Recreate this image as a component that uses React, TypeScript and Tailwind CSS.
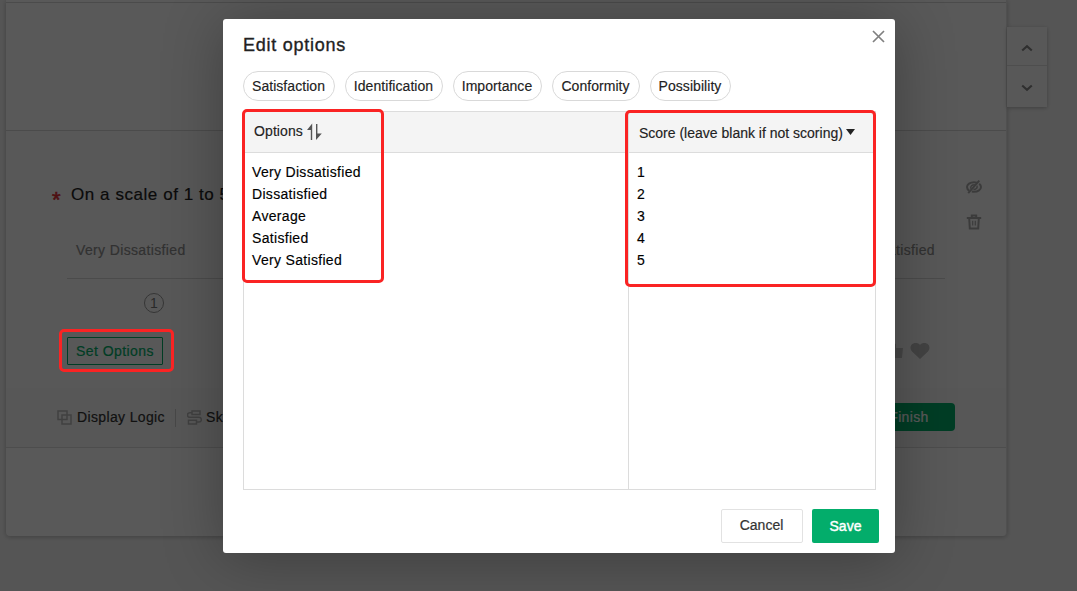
import React from "react";

const presets = [
  { label: "Satisfaction", width: "w-[92px]" },
  { label: "Identification", width: "w-[98px]" },
  { label: "Importance", width: "w-[89px]" },
  { label: "Conformity", width: "w-[88px]" },
  { label: "Possibility", width: "w-[81px]" },
];

const options = ["Very Dissatisfied", "Dissatisfied", "Average", "Satisfied", "Very Satisfied"];

function SideButtons() {
  return (
    <div className="mt-[27px] flex h-20 w-10 flex-col bg-[#fdfdfd] shadow-[0_1px_4px_rgba(0,0,0,0.25)]">
      <div className="flex h-[39px] items-center justify-center border-b border-[#dedede]">
        <svg width="12" height="8" viewBox="0 0 12 8" fill="none" stroke="#888" strokeWidth="2.200" className="mt-[3px]">
          <path d="M1.2 6.500L6 2.200l4.800 4.300" />
        </svg>
      </div>
      <div className="flex flex-1 items-center justify-center">
        <svg width="12" height="8" viewBox="0 0 12 8" fill="none" stroke="#888" strokeWidth="2.200" className="mt-[2px]">
          <path d="M1.2 1.500L6 5.800l4.800-4.300" />
        </svg>
      </div>
    </div>
  );
}

function HiddenEyeIcon() {
  return (
    <svg width="16" height="14" viewBox="0 0 16 14" fill="none" stroke="#aaa" strokeWidth="2">
      <path d="M3.200 10.800C1.800 9.800 1 8.500 1 7c0-2.700 3-4.800 7-4.800 1.100 0 2 .1 2.900.4M13.200 3.700C14.400 4.600 15 5.700 15 7c0 2.700-3 4.800-7 4.800-.8 0-1.500-.1-2.200-.2" />
      <path d="M2.200 13.200L13.300.6" />
      <path d="M4.900 8.800C4.200 6.200 5.900 4.600 8.800 4.700M11.100 5.600c.5 2.500-1.200 4-3.700 3.900" strokeWidth="1.500" />
    </svg>
  );
}

function TrashIcon() {
  return (
    <svg width="16" height="16" viewBox="0 0 16 16" fill="none" stroke="#aaa" strokeWidth="2">
      <path d="M.8 4h14.400M5.800 3.500V1.500h4.400v2M3.200 4.500l.6 10h8.400l.6-10" />
      <path d="M6.700 6.800v4.700M9.300 6.800v4.700" strokeWidth="1.200" />
    </svg>
  );
}

function QuestionPage() {
  return (
    <div className="flex h-full items-start pl-[6px]">
      <div className="h-[536px] w-[1001px] shrink-0 rounded-b-sm border-r border-[#e4e4e4] bg-white shadow-[0_1px_5px_rgba(0,0,0,0.25)]">
        <div className="h-[3px] border-b border-[#d8d8d8]" />
        <div className="h-32 border-b border-[#d8d8d8]" />
        <div className="h-[317px] border-b border-[#dcdcdc]">
          <div className="flex h-[257px] justify-between bg-[#fdfdfd] pt-[49px] pl-[46px]">
            <div className="w-[893px]">
              <div className="flex h-[29px] items-center">
                <span className="mt-[11px] w-[19px] text-[22px] leading-none text-[#e02f36] [-webkit-text-stroke:0.6px_#e02f36]">*</span>
                <span className="text-[17px] tracking-[0.56px] text-[#222] [-webkit-text-stroke:0.2px_#222]">On a scale of 1 to 5</span>
              </div>
              <div className="ml-[15px] flex h-[70px] items-center justify-between border-b border-[#d6d6d6] pt-[14px] pr-[10px] pl-[9px] text-[14px] tracking-[0.36px] text-[#8d8d8d] [-webkit-text-stroke:0.2px_#8d8d8d]">
                <span>Very Dissatisfied</span>
                <span>Very Satisfied</span>
              </div>
              <div className="mt-[14px] ml-[92px] flex size-5 items-center justify-center rounded-full border border-[#999] text-[14px] text-[#777]">1</div>
              <div className="mt-6 ml-[15px] flex h-[28px] items-center justify-between pr-[15px]">
                <div className="flex h-7 w-24 items-center justify-center rounded-[1px] border border-[#00ae68] text-[14px] tracking-[0.43px] text-[#00ae68] [-webkit-text-stroke:0.2px_#00ae68]">Set Options</div>
                <div className="flex items-center gap-[6px]">
                  <svg width="20" height="18" viewBox="0 0 20 18" fill="#c8c8c8"><path d="M1 7h4v9H1zM6 7l4-6 2 1v4h7l-1 10H6z" /></svg>
                  <svg width="20" height="18" viewBox="0 0 20 18" fill="#bfbfbf"><path d="M10 17L2 9.500C-1 6 .8 1 5.500 1 7.500 1 9 1.600 10 3c1-1.400 2.500-2 4.500-2C19.200 1 21 6 18 9.500z" /></svg>
                </div>
              </div>
            </div>
            <div className="flex w-10 flex-col gap-5">
              <HiddenEyeIcon />
              <TrashIcon />
            </div>
          </div>
          <div className="flex h-[59px] items-center bg-[#fafafa] pr-[51px] pl-[51px] text-[14px] tracking-[0.36px] text-[#333]">
            <svg width="15" height="15" viewBox="0 0 15 15" fill="none" stroke="#b8b8b8" strokeWidth="1.500"><path d="M5 9.500H1V1h9v3.500M5 5h9v9H5zM10 5v4.500H5" /></svg>
            <span className="ml-[5px] [-webkit-text-stroke:0.2px_#333]">Display Logic</span>
            <span className="mr-[11px] ml-[10px] h-[18px] w-px bg-[#ccc]" />
            <svg width="15" height="15" viewBox="0 0 15 15" fill="none" stroke="#b8b8b8" strokeWidth="1.500"><path d="M5 1h8v3.500H5zM5 2.700H2.800a2.300 2.300 0 0 0 0 4.600h9.200a2.300 2.300 0 0 1 0 4.700H9.500M1.500 10.200h8V14h-8z" /></svg>
            <span className="ml-1 [-webkit-text-stroke:0.2px_#333]">Skip Logic</span>
            <div className="mb-[2px] ml-auto flex h-7 w-[92px] items-center justify-center rounded-sm bg-[#00af6b] text-white [-webkit-text-stroke:0.2px_white]"><span className="mt-px">Finish</span></div>
          </div>
        </div>
      </div>
      <SideButtons />
    </div>
  );
}

function SortIcon() {
  return (
    <svg width="15" height="18" viewBox="0 0 15 18" fill="#555">
      <path d="M5.200.5v16.500H3.800V7H0z" />
      <path d="M9 1h1.400v9.500H14.800L9 17z" />
    </svg>
  );
}

function EditOptionsDialog() {
  return (
    <div className="flex h-[534px] w-[672px] flex-col rounded-[3px] bg-white px-5 shadow-[0_4px_60px_rgba(0,0,0,0.3)]">
      <div className="flex h-[52px] justify-between">
        <h2 className="mt-[13px] text-[18px] leading-[26px] tracking-[0.75px] text-[#222] [-webkit-text-stroke:0.35px_#222]">Edit options</h2>
        <svg width="13" height="13" viewBox="0 0 13 13" fill="none" stroke="#808080" strokeWidth="1.700" className="mt-[11px] -mr-[10px]"><path d="M1 1l11 11M12 1L1 12" /></svg>
      </div>
      <div className="flex gap-[10px] text-[14px] text-[#222]">
        {presets.map((p) => (
          <button key={p.label} className={`${p.width} h-[30px] shrink-0 rounded-full border border-[#d9d9d9] pr-px tracking-[0.05px] whitespace-nowrap [-webkit-text-stroke:0.15px_#222]`}>{p.label}</button>
        ))}
      </div>
      <div className="mt-[10px] flex h-[379px] w-[633px] border border-[#dcdcdc] text-[14px] [-webkit-text-stroke:0.15px]">
        <div className="w-[385px] border-r border-[#dcdcdc]">
          <div className="flex h-[41px] items-center gap-[4px] border-b border-[#dcdcdc] bg-[#f4f4f4] pl-[10px] text-[#222]">
            <span className="mb-[2px] tracking-[0.1px]">Options</span>
            <SortIcon />
          </div>
          <div className="pt-2 pl-2 leading-[22px] tracking-[0.32px] text-black">
            {options.map((o) => <div key={o}>{o}</div>)}
          </div>
        </div>
        <div className="flex-1">
          <div className="flex h-[41px] items-center border-b border-[#dcdcdc] bg-[#f4f4f4] pt-[2px] pl-[10px] text-[#222]">
            <span>Score (leave blank if not scoring)</span>
            <svg width="9" height="6" viewBox="0 0 9 6" fill="#222" className="mb-[3px] ml-[3px]"><path d="M0 0h9L4.500 6z" /></svg>
          </div>
          <div className="pt-2 pl-2 leading-[22px] text-black">
            {options.map((o, i) => <div key={o}>{i + 1}</div>)}
          </div>
        </div>
      </div>
      <div className="mt-[19px] -mr-1 flex justify-end gap-[9px] text-[14px]">
        <button className="h-[34px] w-[82px] rounded-[2px] border border-[#e2e2e2] pr-px pb-[2px] text-[#333] [-webkit-text-stroke:0.2px_#333]">Cancel</button>
        <button className="h-[34px] w-[67px] rounded-[2px] bg-[#03ad6b] text-white [-webkit-text-stroke:0.4px_white]">Save</button>
      </div>
    </div>
  );
}

export default function App() {
  return (
    <div className="relative h-[591px] w-[1077px] overflow-hidden bg-[#f4f4f4] font-['Liberation_Sans',Arial,sans-serif]">
      <QuestionPage />
      <div className="absolute inset-0 flex items-start justify-center bg-black/65 pt-[19px] pl-[41px]">
        <EditOptionsDialog />
      </div>
      <div className="absolute top-[329px] left-[59px] h-[43px] w-[115px] rounded-[5px] border-3 border-[#fa2323]" />
      <div className="absolute top-[109px] left-[242px] h-[174px] w-[142px] rounded-[5px] border-3 border-[#fa2323]" />
      <div className="absolute top-[110px] left-[625px] h-[177px] w-[251px] rounded-[5px] border-3 border-[#fa2323]" />
    </div>
  );
}
